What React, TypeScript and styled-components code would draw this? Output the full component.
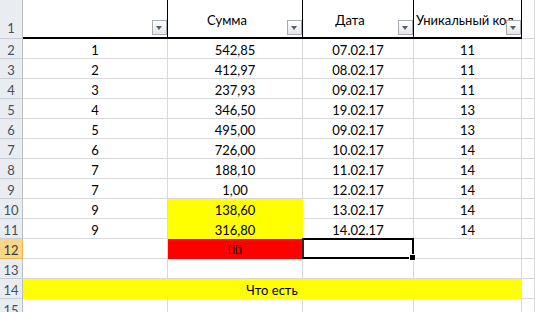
import React from "react"
import styled, { createGlobalStyle, css } from "styled-components"

const GlobalStyle = createGlobalStyle`
  html, body {
    margin: 0;
    padding: 0;
    background: #fff;
  }
  * {
    box-sizing: border-box;
  }
`

const GRID = "#d9d9d9"

const Sheet = styled.div`
  display: grid;
  grid-template-columns: 23px 145px 135px 111px 108px 1fr;
  grid-template-rows: 39px;
  grid-auto-rows: 20px;
  width: 535px;
  height: 312px;
  overflow: hidden;
  font-family: Lato, "Open Sans", sans-serif;
  font-size: 13px;
  color: #000;
`

const RowHead = styled.div<{ $active?: boolean; $top?: boolean }>`
  display: flex;
  justify-content: center;
  align-items: ${(p) => (p.$top ? "flex-end" : "center")};
  padding: ${(p) => (p.$top ? "0 0 2px" : "2px 0 0")};
  background: ${(p) => (p.$active ? "#f9d68a" : "#e9edf2")};
  color: ${(p) => (p.$active ? "#3a3a3a" : "#4a4f57")};
  border-right: 1px solid ${(p) => (p.$active ? "#e8b64f" : "#b8bfc8")};
  border-bottom: 1px solid ${(p) => (p.$active ? "#e8b64f" : "#c9cfd6")};
`

const HeadCell = styled.div<{ $left?: boolean }>`
  position: relative;
  display: flex;
  align-items: center;
  justify-content: ${(p) => (p.$left ? "flex-start" : "center")};
  padding: 3px ${(p) => (p.$left ? "0 0 2px" : "16px 0 0")};
  overflow: hidden;
  white-space: nowrap;
  border-right: 1px solid #000;
  border-bottom: 2px solid #000;
`

const FilterButton = styled.span`
  position: absolute;
  right: 0;
  bottom: 2px;
  width: 15px;
  height: 15px;
  border: 1px solid #a9adb3;
  background: linear-gradient(#ffffff, #e4e6ea);

  &::after {
    content: "";
    position: absolute;
    left: 3px;
    top: 5px;
    border-left: 3.5px solid transparent;
    border-right: 3.5px solid transparent;
    border-top: 4px solid #59606b;
  }
`

const Cell = styled.div<{ $fill?: string; $selected?: boolean; $span?: number }>`
  position: relative;
  display: flex;
  align-items: center;
  justify-content: center;
  padding-top: 2px;
  white-space: nowrap;
  background: ${(p) => p.$fill || "#fff"};
  border-right: 1px solid ${(p) => p.$fill || GRID};
  border-bottom: 1px solid ${(p) => p.$fill || GRID};
  ${(p) => p.$span && css`grid-column: span ${p.$span};`}
  ${(p) =>
    p.$selected &&
    css`
      &::after {
        content: "";
        position: absolute;
        left: -1px;
        top: -1px;
        right: -1px;
        bottom: -1px;
        border: 2px solid #000;
        border-left-color: #2a2a2a;
      }
      &::before {
        content: "";
        position: absolute;
        right: -3px;
        bottom: -3px;
        width: 5px;
        height: 5px;
        background: #000;
        border: 1px solid #fff;
        z-index: 1;
      }
    `}
`

const Tofu = styled.span`
  display: inline-flex;
  gap: 1px;
  margin-top: -1px;
`

const TofuBox = styled.span`
  position: relative;
  display: inline-block;
  width: 6px;
  height: 9px;
  border: 1px solid #5a0000;

  &::after {
    content: "";
    position: absolute;
    left: 1px;
    top: 1px;
    width: 2px;
    height: 5px;
    border: 1px solid #5a0000;
    border-left: none;
  }
`

const rows: [string, string, string, string][] = [
  ["1", "542,85", "07.02.17", "11"],
  ["2", "412,97", "08.02.17", "11"],
  ["3", "237,93", "09.02.17", "11"],
  ["4", "346,50", "19.02.17", "13"],
  ["5", "495,00", "09.02.17", "13"],
  ["6", "726,00", "10.02.17", "14"],
  ["7", "188,10", "11.02.17", "14"],
  ["7", "1,00", "12.02.17", "14"],
  ["9", "138,60", "13.02.17", "14"],
  ["9", "316,80", "14.02.17", "14"],
]

const YELLOW = "#ffff00"
const RED = "#ff0000"

export default function App() {
  return (
    <>
      <GlobalStyle />
      <Sheet>
        <RowHead $top>1</RowHead>
        <HeadCell>
          <FilterButton />
        </HeadCell>
        <HeadCell>
          Сумма
          <FilterButton />
        </HeadCell>
        <HeadCell>
          Дата
          <FilterButton />
        </HeadCell>
        <HeadCell $left>
          Уникальный код
          <FilterButton />
        </HeadCell>
        <Cell />

        {rows.map((r, i) => (
          <React.Fragment key={i}>
            <RowHead>{i + 2}</RowHead>
            <Cell>{r[0]}</Cell>
            <Cell $fill={i >= 8 ? YELLOW : undefined}>{r[1]}</Cell>
            <Cell>{r[2]}</Cell>
            <Cell>{r[3]}</Cell>
            <Cell />
          </React.Fragment>
        ))}

        <RowHead $active>12</RowHead>
        <Cell />
        <Cell $fill={RED}>
          <Tofu>
            <TofuBox />
            <TofuBox />
          </Tofu>
        </Cell>
        <Cell $selected />
        <Cell />
        <Cell />

        <RowHead>13</RowHead>
        <Cell />
        <Cell />
        <Cell />
        <Cell />
        <Cell />

        <RowHead>14</RowHead>
        <Cell $fill={YELLOW} $span={4}>
          Что есть
        </Cell>
        <Cell />

        <RowHead>15</RowHead>
        <Cell />
        <Cell />
        <Cell />
        <Cell />
        <Cell />
      </Sheet>
    </>
  )
}
